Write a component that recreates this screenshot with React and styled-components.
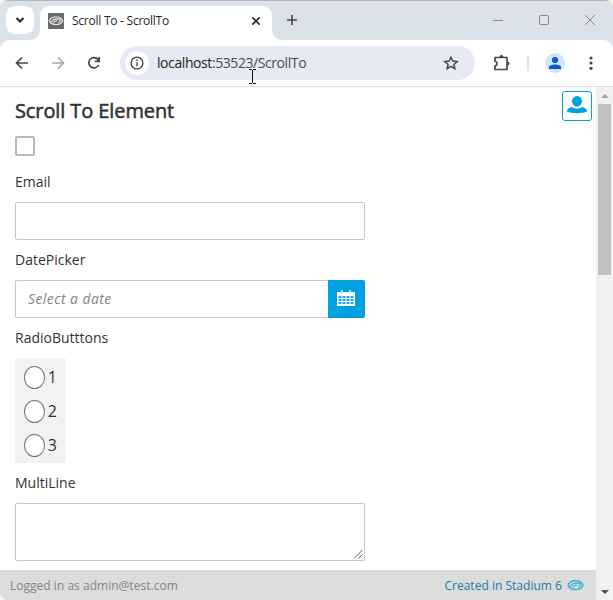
import React from "react";
import styled, { createGlobalStyle } from "styled-components";

const GlobalStyle = createGlobalStyle`
  * { box-sizing: border-box; }
  body { margin: 0; background: #f3f3f3; overflow: hidden; }
`;

const Window = styled.div`
  position: relative;
  width: 613px;
  height: 600px;
  display: flex;
  flex-direction: column;
  overflow: hidden;
  border-radius: 8px;
  background: #dce2ea;
  font-family: "Open Sans", "Noto Sans", sans-serif;
  color: #333;
`;

const TabStrip = styled.header`
  height: 40px;
  flex: none;
  display: flex;
  align-items: flex-start;
  padding: 5px 0 0 6px;
  border-top: 1px solid #b5b6b8;
`;

const TabSearch = styled.div`
  width: 28px;
  height: 28px;
  border-radius: 9px;
  background: #fff;
  display: grid;
  place-items: center;
`;

const Tab = styled.div`
  position: relative;
  width: 232px;
  height: 34px;
  margin-left: 6px;
  padding: 0 8px;
  display: flex;
  align-items: center;
  background: #fff;
  border-radius: 9px 9px 0 0;
  &::before, &::after {
    content: "";
    position: absolute;
    bottom: 0;
    width: 10px;
    height: 10px;
  }
  &::before {
    left: -10px;
    background: radial-gradient(circle at 0 0, transparent 9.5px, #fff 10px);
  }
  &::after {
    right: -10px;
    background: radial-gradient(circle at 100% 0, transparent 9.5px, #fff 10px);
  }
`;

const TabTitle = styled.span`
  flex: 1;
  margin: -5px 0 0 8px;
  font-size: 12px;
  line-height: 16px;
  letter-spacing: -0.25px;
  color: #1f1f1f;
`;

const TabIcon = styled.svg`
  flex: none;
  margin-top: -5px;
`;

const NewTab = styled.div`
  width: 28px;
  height: 28px;
  margin-left: 6px;
  display: grid;
  place-items: center;
`;

const WindowControls = styled.div`
  display: flex;
  margin-left: auto;
  height: 28px;
  align-items: center;
`;

const WindowButton = styled.div`
  width: 46px;
  display: grid;
  place-items: center;
`;

const Toolbar = styled.div`
  height: 47px;
  flex: none;
  display: flex;
  align-items: center;
  background: #fff;
  border-bottom: 1px solid #dedfe0;
  border-radius: 9px 9px 0 0;
  padding-left: 4px;
`;

const ToolButton = styled.div`
  flex: none;
  width: ${(p) => p.$width}px;
  height: 34px;
  display: grid;
  place-items: center;
`;

const AddressBar = styled.div`
  width: 355px;
  height: 34px;
  margin: 0 10px 0 8px;
  padding: 0 16px 0 5px;
  border-radius: 17px;
  background: #e7eaf4;
  display: flex;
  align-items: center;
`;

const SiteInfo = styled.div`
  width: 24px;
  height: 24px;
  border-radius: 50%;
  background: #fff;
  display: grid;
  place-items: center;
`;

const Url = styled.span`
  flex: 1;
  margin-left: 8px;
  font-size: 14px;
  line-height: 20px;
  letter-spacing: -0.42px;
  color: #474b53;
  b { font-weight: 400; color: #1f1f1f; }
`;

const Separator = styled.i`
  width: 2px;
  height: 16px;
  margin: 0 12px 0 8px;
  border-radius: 1px;
  background: #d3e3fd;
`;

const Viewport = styled.div`
  flex: 1;
  display: flex;
  min-height: 0;
  background: #fff;
`;

const Page = styled.div`
  width: 596px;
  display: flex;
  flex-direction: column;
`;

const Content = styled.main`
  height: 483px;
  padding: 4px 4px 0 15px;
  display: flex;
  justify-content: space-between;
  align-items: flex-start;
`;

const Form = styled.form`
  width: 350px;
  display: flex;
  flex-direction: column;
`;

const Heading = styled.h1`
  margin: 4px 0 0;
  height: 32px;
  font-size: 20px;
  line-height: 32px;
  font-weight: 400;
  letter-spacing: -0.1px;
  white-space: nowrap;
  -webkit-text-stroke: 0.55px #333;
`;

const Checkbox = styled.div`
  width: 20px;
  height: 20px;
  margin: 9px 0 6px;
  border: 2px solid #b9b9b9;
  border-radius: 2px;
`;

const Label = styled.label`
  height: 40px;
  padding-top: 10px;
  font-size: 14px;
  line-height: 20px;
`;

const Field = styled.div`
  flex: ${(p) => (p.$grow ? "1" : "none")};
  height: ${(p) => p.$height || 38}px;
  border: 1px solid #c6c6c6;
  border-right-width: ${(p) => (p.$grow ? 0 : 1)}px;
  border-radius: ${(p) => (p.$grow ? "2px 0 0 2px" : "2px")};
  display: flex;
  align-items: center;
`;

const DateInput = styled.div`
  display: flex;
`;

const Placeholder = styled.span`
  padding-left: 12px;
  font-size: 14px;
  font-style: italic;
  line-height: 20px;
  letter-spacing: 0.42px;
  color: #858585;
`;

const CalendarButton = styled.div`
  width: 37px;
  height: 38px;
  padding: 0 1px 2px 0;
  flex: none;
  display: grid;
  place-items: center;
  border-radius: 0 2px 2px 0;
  background: #00a1e0;
`;

const RadioGroup = styled.div`
  width: 51px;
  height: 105px;
  padding: 2px 9px 0;
  border-radius: 2px;
  background: #f2f2f2;
`;

const Radio = styled.div`
  height: 34px;
  display: flex;
  align-items: center;
  gap: 3px;
  font-size: 16px;
  line-height: 22px;
  &::before {
    content: "";
    width: 21px;
    height: 21px;
    border: 1px solid #777;
    border-radius: 50%;
    background: #fff;
  }
`;

const ResizeGrip = styled.svg`
  align-self: flex-end;
  margin: 0 1px 1px auto;
`;

const UserButton = styled.div`
  width: 30px;
  height: 30px;
  padding-bottom: 2px;
  border: 1px solid #00a1e0;
  border-radius: 3px;
  display: grid;
  place-items: center;
`;

const Footer = styled.footer`
  height: 30px;
  padding: 0 12px 0 10px;
  background: #dcdcdc;
  display: flex;
  align-items: center;
  justify-content: space-between;
  font-size: 12px;
  letter-spacing: 0.02px;
  color: #858585;
`;

const Credit = styled.span`
  display: flex;
  align-items: center;
  gap: 5px;
  color: #197f9e;
`;

const Scrollbar = styled.div`
  width: 17px;
  background: #f1f1f1;
  display: flex;
  flex-direction: column;
  align-items: center;
`;

const ScrollArrow = styled.div`
  height: 17px;
  display: grid;
  place-items: center;
`;

const ScrollThumb = styled.div`
  width: 13px;
  height: 171px;
  margin-bottom: auto;
  background: #c1c1c1;
`;

const Pointer = styled.svg`
  position: absolute;
  left: 249px;
  top: 69px;
`;

function Swirl({ color, width = 16, height = 11 }) {
  return (
    <svg width={width} height={height} viewBox="0 0 16 11" fill="none" stroke={color}>
      <ellipse cx="8" cy="5.2" rx="7.3" ry="4.4" strokeWidth="1.5" />
      <path strokeWidth="1.3" d="M3 7.6C2.6 4.4 6.7 2.7 10.3 3.1c3.8.5 3.5 3.2.2 4.2" />
      <path strokeWidth="1.2" d="M5.6 8.4C4.9 6.3 7 5 9.6 5.5" />
    </svg>
  );
}

function Cross({ size, width, color }) {
  return (
    <svg width={size} height={size} viewBox="0 0 12 12" fill="none" stroke={color} strokeWidth={width}>
      <path d="m1 1 10 10M11 1 1 11" />
    </svg>
  );
}

function Arrow({ flip, color }) {
  return (
    <svg width="16" height="16" viewBox="0 0 16 16" fill="none" stroke={color} strokeWidth="1.7">
      <path d={flip ? "M2 8h11M8 2.5 13.5 8 8 13.5" : "M14 8H3M8 2.5 2.5 8 8 13.5"} />
    </svg>
  );
}

function Calendar() {
  return (
    <svg width="18" height="16" viewBox="0 0 18 16">
      <path fill="#fff" d="M0 2h18v14H0z" />
      <path fill="#a6dff5" d="M4 0h2v3H4zM12 0h2v3h-2z" />
      <path stroke="#1fade4" strokeWidth="2" strokeDasharray="3 1" d="M1.5 7h15M1.5 10h15M1.5 13h15" />
    </svg>
  );
}

export default function App() {
  return (
    <>
      <GlobalStyle />
      <Window>
        <TabStrip>
          <TabSearch>
            <svg width="10" height="8" viewBox="0 0 10 8" fill="none" stroke="#202124" strokeWidth="2">
              <path d="m1.5 2 3.5 3.5L8.5 2" />
            </svg>
          </TabSearch>
          <Tab>
            <TabIcon width="16" height="16">
              <rect width="16" height="16" rx="1" fill="#696969" />
              <svg x="1" y="3" width="14" height="10" viewBox="0 0 16 11">
                <Swirl color="#e5e5e5" />
              </svg>
            </TabIcon>
            <TabTitle>Scroll To - ScrollTo</TabTitle>
            <TabIcon width="16" height="16" fill="none" stroke="#333" strokeWidth="1.7">
              <path d="m4.3 4.3 7.4 7.4M11.7 4.3l-7.4 7.4" />
            </TabIcon>
          </Tab>
          <NewTab>
            <svg width="12" height="12" stroke="#474747" strokeWidth="1.6"><path d="M6 1v10M1 6h10" /></svg>
          </NewTab>
          <WindowControls>
            <WindowButton>
              <svg width="10" height="10" stroke="#858789"><path d="M0 5.5h10" /></svg>
            </WindowButton>
            <WindowButton>
              <svg width="10" height="10" fill="none" stroke="#858789"><rect x=".5" y=".5" width="9" height="9" rx="1" /></svg>
            </WindowButton>
            <WindowButton><Cross size={12} width={1} color="#858789" /></WindowButton>
          </WindowControls>
        </TabStrip>

        <Toolbar>
          <ToolButton $width={36}><Arrow color="#474747" /></ToolButton>
          <ToolButton $width={36}><Arrow flip color="#aaa" /></ToolButton>
          <ToolButton $width={36}>
            <svg width="16" height="16" viewBox="0 0 16 16" fill="none" stroke="#474747" strokeWidth="1.7">
              <path d="M12.7 10A5.2 5.2 0 1 1 12 4.4l1.3 1.9M13.2 2v4.4H8.8" />
            </svg>
          </ToolButton>
          <AddressBar>
            <SiteInfo>
              <svg width="14" height="14" fill="none" stroke="#474747" strokeWidth="1.4">
                <circle cx="7" cy="7" r="5.9" />
                <path d="M7 6.2v4M7 3.5v1.4" />
              </svg>
            </SiteInfo>
            <Url><b>localhost</b>:53523/ScrollTo</Url>
            <svg width="16" height="16" viewBox="0 0 16 16" fill="none" stroke="#474747" strokeWidth="1.5">
              <path d="m8 2.2 1.8 3.9 4.4.4-3.3 2.9 1 4.3L8 11.4l-3.9 2.3 1-4.3-3.3-2.9 4.4-.4z" />
            </svg>
          </AddressBar>
          <ToolButton $width={34}>
            <svg width="18" height="18" viewBox="0 0 18 18">
              <path d="M2 3.5h12V15.5H2V12q2-.7 2-2.5T2 7z" fill="none" stroke="#474747" strokeWidth="1.7" strokeLinejoin="round" />
              <path d="M6.5 3a2 2 0 0 1 4 0zM14.5 7.5a2 2 0 0 1 0 4z" fill="#474747" />
            </svg>
          </ToolButton>
          <Separator />
          <ToolButton $width={28}>
            <svg width="20" height="20">
              <circle cx="10" cy="10" r="10" fill="#d3e3fd" />
              <circle cx="10" cy="7" r="3.1" fill="#0b57d0" />
              <path d="M4 16v-2.2c0-1.4 3.8-2.4 6-2.4s6 1 6 2.4V16z" fill="#0b57d0" />
            </svg>
          </ToolButton>
          <ToolButton $width={44}>
            <svg width="4" height="16" fill="#474747">
              <circle cx="2" cy="3" r="1.6" /><circle cx="2" cy="8" r="1.6" /><circle cx="2" cy="13.3" r="1.6" />
            </svg>
          </ToolButton>
        </Toolbar>

        <Viewport>
          <Page>
            <Content>
              <Form>
                <Heading>Scroll To Element</Heading>
                <Checkbox />
                <Label>Email</Label>
                <Field />
                <Label>DatePicker</Label>
                <DateInput>
                  <Field $grow>
                    <Placeholder>Select a date</Placeholder>
                  </Field>
                  <CalendarButton><Calendar /></CalendarButton>
                </DateInput>
                <Label>RadioButttons</Label>
                <RadioGroup>
                  <Radio>1</Radio>
                  <Radio>2</Radio>
                  <Radio>3</Radio>
                </RadioGroup>
                <Label>MultiLine</Label>
                <Field $height={58}>
                  <ResizeGrip width="9" height="9" stroke="#555" strokeWidth="1">
                    <path d="M0 8.5 8.5 0M4.5 8.5l4-4" />
                  </ResizeGrip>
                </Field>
              </Form>
              <UserButton>
                <svg width="20" height="18" fill="#00a1e0">
                  <ellipse cx="10" cy="5.3" rx="5" ry="5.3" />
                  <path d="M0 15.5c0-2.6 2.6-4 5-4.5 3 2.3 7 2.3 10 0 2.4.5 5 1.9 5 4.5-3.3 2.2-16.7 2.2-20 0z" />
                </svg>
              </UserButton>
            </Content>
            <Footer>
              <span>Logged in as admin@test.com</span>
              <Credit>Created in Stadium 6 <Swirl color="#35b3d0" width={17} height={11} /></Credit>
            </Footer>
          </Page>
          <Scrollbar>
            <ScrollArrow><svg width="8" height="4" fill="#a3a3a3"><path d="M0 4 4 0l4 4z" /></svg></ScrollArrow>
            <ScrollThumb />
            <ScrollArrow><svg width="8" height="4" fill="#505050"><path d="m0 0 4 4 4-4z" /></svg></ScrollArrow>
          </Scrollbar>
        </Viewport>
        <Pointer width="7" height="15" fill="none" stroke="#111">
          <path d="M0 .5h3M4 .5h3M3.5 1v13M0 14.5h3M4 14.5h3" />
        </Pointer>
      </Window>
    </>
  );
}
